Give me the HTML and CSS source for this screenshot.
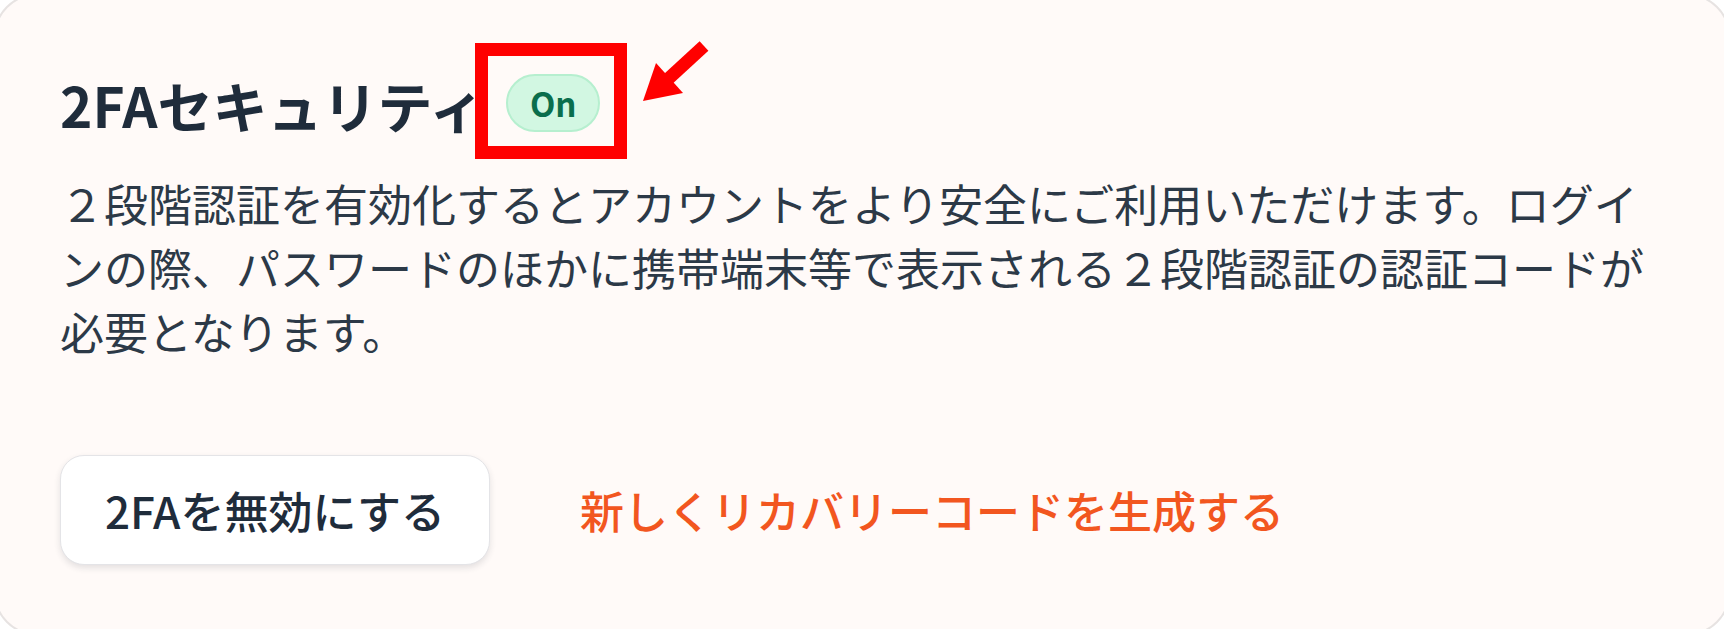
FILE: index.html
```html
<!DOCTYPE html>
<html lang="ja">
<head>
<meta charset="utf-8">
<title>2FAセキュリティ</title>
<link rel="stylesheet" href="styles.css">
</head>
<body>
<section class="card">
  <div class="head">
    <h2 class="title">2FAセキュリティ</h2>
    <span class="badge">On</span>
  </div>
  <p class="desc">２段階認証を有効化するとアカウントをより安全にご利用いただけます。ログインの際、パスワードのほかに携帯端末等で表示される２段階認証の認証コードが必要となります。</p>
  <div class="actions">
    <button class="btn" type="button">2FAを無効にする</button>
    <a class="link" href="#">新しくリカバリーコードを生成する</a>
  </div>
</section>
<div class="mark"></div>
<svg class="arrow" width="760" height="200" viewBox="0 0 760 200" aria-hidden="true">
  <line x1="704" y1="46" x2="667" y2="80" stroke="#ff0000" stroke-width="13"/>
  <polygon points="643,101 656,63 683,93" fill="#ff0000"/>
</svg>
</body>
</html>
```
FILE: styles.css
```css
html, body {
  margin: 0;
  padding: 0;
  overflow: hidden;
  background: #ffffff;
}
body {
  position: relative;
  width: 1724px;
  height: 629px;
  font-family: "Noto Sans CJK JP", "Noto Sans", sans-serif;
}
.card {
  box-sizing: border-box;
  margin: -6px;
  height: 641px;
  padding: 72px 60px 0 64px;
  background: #fffaf8;
  border: 2px solid #e7e3e2;
  border-radius: 42px;
}
.head {
  display: flex;
  align-items: center;
  gap: 22px;
}
.title {
  margin: 0;
  font-size: 55px;
  line-height: 72px;
  font-weight: 700;
  color: #1f2c3b;
}
.badge {
  box-sizing: border-box;
  display: flex;
  align-items: center;
  justify-content: center;
  width: 94px;
  height: 58px;
  margin-bottom: 2px;
  border-radius: 29px;
  background: #d2f7e2;
  border: 2px solid #b6efcf;
  color: #0a6e4c;
  font-size: 33px;
  font-weight: 700;
  line-height: 1;
}
.desc {
  margin: 31px 0 0;
  font-size: 44px;
  line-height: 64px;
  color: #2c3947;
}
.actions {
  display: flex;
  align-items: center;
  gap: 90px;
  margin-top: 92px;
}
.btn {
  box-sizing: border-box;
  height: 110px;
  padding: 0 44px;
  font-family: inherit;
  font-size: 44px;
  line-height: 64px;
  font-weight: 500;
  color: #1f2c3b;
  background: #ffffff;
  border: 1px solid #e4e4e7;
  border-radius: 24px;
  box-shadow: 0 3px 6px rgba(30, 40, 60, 0.12);
}
.link {
  font-size: 44px;
  line-height: 64px;
  font-weight: 500;
  color: #f2561f;
  text-decoration: none;
}
.mark {
  position: absolute;
  left: 475px;
  top: 43px;
  width: 152px;
  height: 116px;
  box-sizing: border-box;
  border: 13px solid #ff0000;
}
.arrow {
  position: absolute;
  left: 0;
  top: 0;
}
```
